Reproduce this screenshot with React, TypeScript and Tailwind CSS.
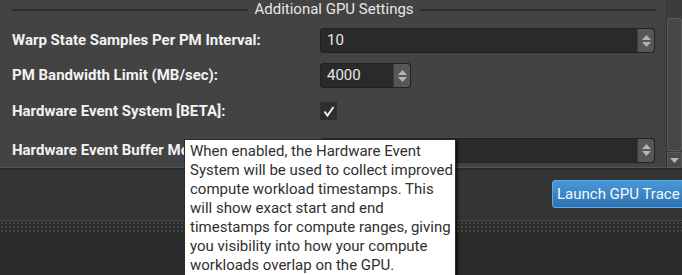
import React from 'react';

const font = { fontFamily: 'Roboto, "Noto Sans", sans-serif' };

const tooltipLines = [
    'When enabled, the Hardware Event',
    'System will be used to collect improved',
    'compute workload timestamps. This',
    'will show exact start and end',
    'timestamps for compute ranges, giving',
    'you visibility into how your compute',
    'workloads overlap on the GPU.',
];

const SpinArrows: React.FC = () => (
    <div className="w-[17px] h-full bg-[#575757] border-l border-[#3a3a3a] rounded-r-[3px] flex flex-col items-center justify-center gap-[2px]">
        <svg width="9" height="5" viewBox="0 0 9 5"><path d="M0 5 L4.5 0 L9 5 Z" fill="#b4b4b4" /></svg>
        <svg width="9" height="5" viewBox="0 0 9 5"><path d="M0 0 L4.5 5 L9 0 Z" fill="#b4b4b4" /></svg>
    </div>
);

const SpinBox: React.FC<{ value: string; width: string }> = ({ value, width }) => (
    <div className={`${width} h-[25px] flex bg-[#2a2a2a] border border-[#222] rounded-[3px] overflow-hidden`}>
        <div className="flex-1 flex items-center pl-[6px] text-[15px] text-[#e8e8e8]">{value}</div>
        <SpinArrows />
    </div>
);

const Row: React.FC<{ label: string; children: React.ReactNode; className?: string }> = ({ label, children, className }) => (
    <div className={`flex items-center ${className ?? ''}`}>
        <div className="w-[308px] text-[15px] font-bold text-[#f2f2f2] whitespace-nowrap">{label}</div>
        {children}
    </div>
);

const App: React.FC = () => {
    return (
        <div className="w-[682px] h-[275px] relative overflow-hidden bg-[#2b2b2b]" style={font}>
            {/* settings panel */}
            <div className="h-[170px] flex bg-[#434343] border-b-2 border-[#2a2a2a]">
                <div className="flex-1 flex flex-col pl-[12px] pr-[10px]">
                    <div className="h-[19px] flex items-center gap-[6px]">
                        <div className="flex-1 h-[2px] bg-[#2c2c2c]"></div>
                        <span className="text-[15px] text-[#e6e6e6] leading-none -mt-[1px]">Additional GPU Settings</span>
                        <div className="flex-1 h-[2px] bg-[#2c2c2c]"></div>
                    </div>
                    <Row label="Warp State Samples Per PM Interval:" className="mt-[9px]">
                        <SpinBox value="10" width="w-[335px]" />
                    </Row>
                    <Row label="PM Bandwidth Limit (MB/sec):" className="mt-[10px]">
                        <SpinBox value="4000" width="w-[91px]" />
                    </Row>
                    <Row label="Hardware Event System [BETA]:" className="mt-[12px]">
                        <div className="w-[17px] h-[18px] bg-[#2e2e2e] flex items-center justify-center">
                            <svg width="12" height="11" viewBox="0 0 12 11">
                                <path d="M1.5 5.5 L4.5 9.5 L10.5 1" stroke="#f0f0f0" strokeWidth="2" fill="none" />
                            </svg>
                        </div>
                    </Row>
                    <Row label="Hardware Event Buffer Memory Size (MB):" className="mt-[15px]">
                        <SpinBox value="" width="w-[335px]" />
                    </Row>
                    <div className="flex-1"></div>
                    <div className="h-[1px] bg-[#555] -mx-[12px]"></div>
                </div>
                {/* scrollbar */}
                <div className="w-[16px] flex flex-col border-l border-[#333] bg-[#3c3c3c]">
                    <div className="h-[18px]"></div>
                    <div className="flex-1 bg-[#474747] border border-[#5a5a5a] rounded-[2px]"></div>
                    <div className="h-[16px] mt-[1px] bg-[#4a4a4a] border border-[#5a5a5a] flex items-center justify-center">
                        <svg width="9" height="5" viewBox="0 0 9 5"><path d="M0 0 L4.5 5 L9 0 Z" fill="#b4b4b4" /></svg>
                    </div>
                </div>
            </div>
            {/* action strip */}
            <div className="h-[50px] bg-[#343434] flex items-start justify-end">
                <button className="mt-[10px] -mr-[10px] w-[140px] h-[28px] pl-[4px] text-left rounded-[3px] border border-[#5aaee8] bg-gradient-to-b from-[#4a98d8] to-[#2e72b2] text-[15px] text-[#f4f8fc] whitespace-nowrap">
                    Launch GPU Trace
                </button>
            </div>
            <div className="h-[1px] bg-[#474747]"></div>
            <div className="h-[12px] bg-[#2b2b2b] bg-[radial-gradient(#464646_1px,transparent_1px)] bg-[length:4px_4px]"></div>
            {/* tooltip */}
            <div className="absolute left-[184px] top-[139px] w-[272px] bg-white border border-[#2a2a2a] shadow-[2px_2px_2px_rgba(0,0,0,0.6)] px-[5px] pt-[2px] pb-[6px] text-[15px] leading-[19px] text-[#303030] whitespace-nowrap">
                {tooltipLines.map(line => (
                    <div key={line}>{line}</div>
                ))}
            </div>
        </div>
    );
};

export default App;
